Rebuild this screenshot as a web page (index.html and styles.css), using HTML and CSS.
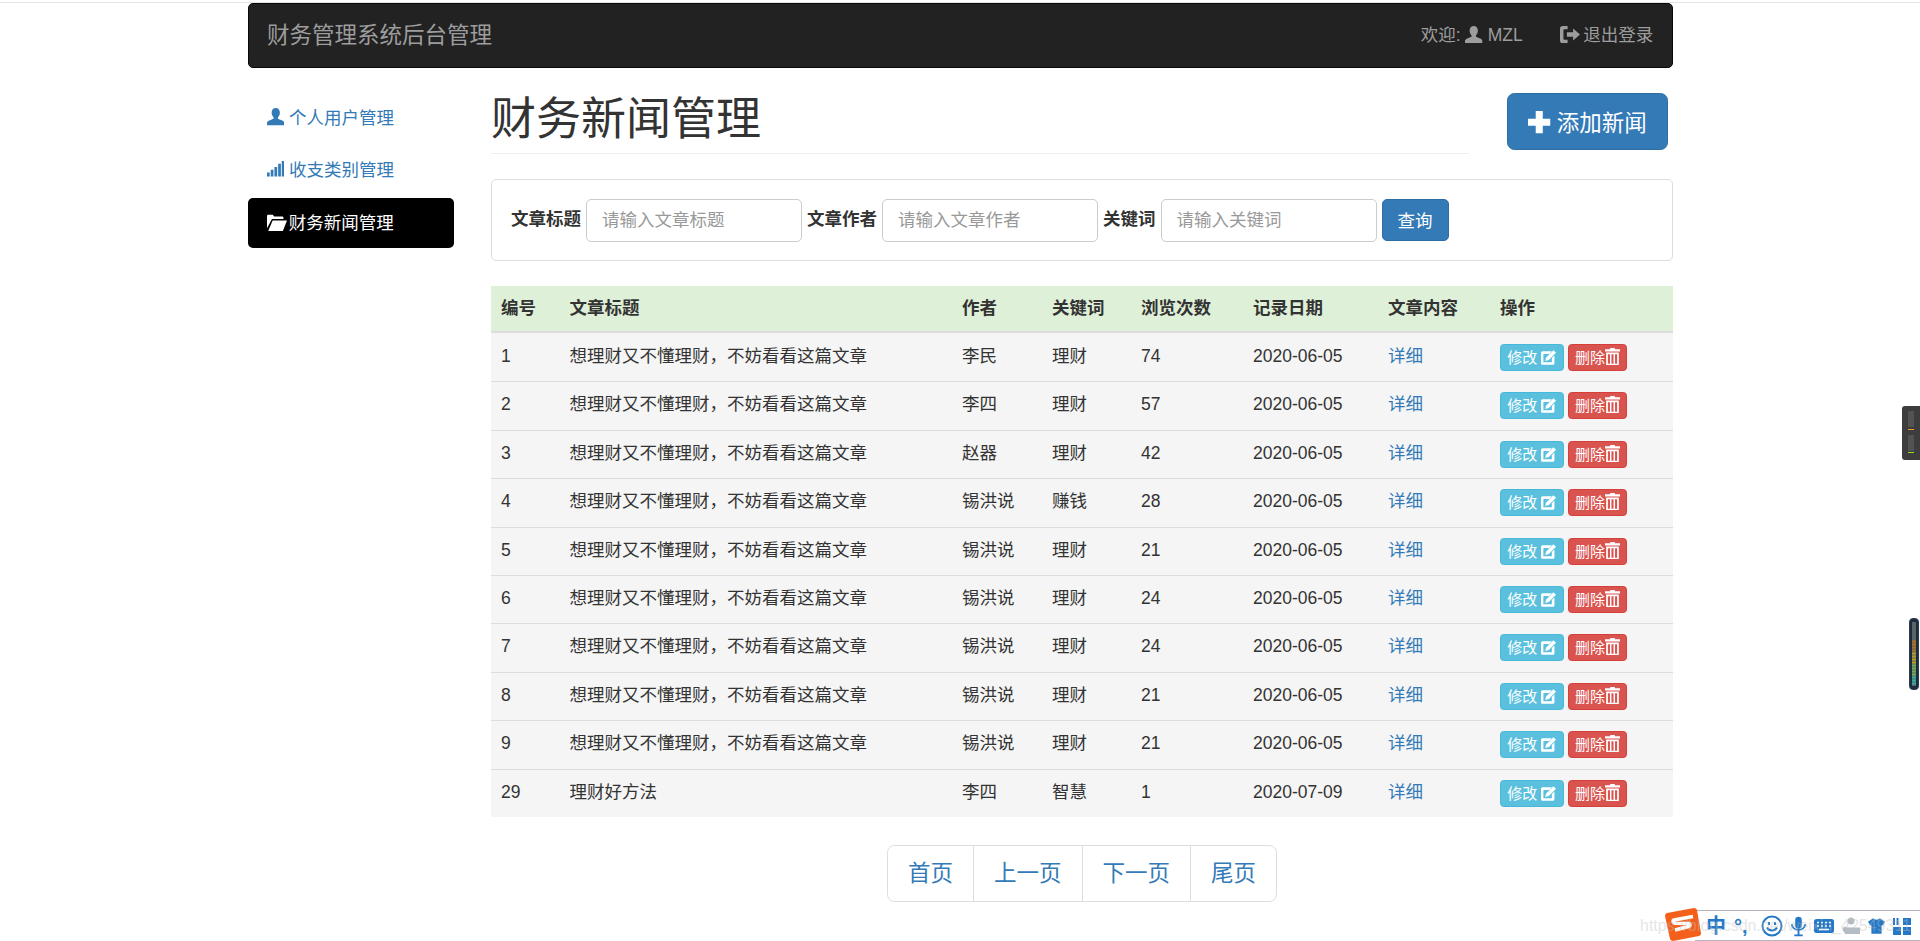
FILE: index.html
```html
<!DOCTYPE html>
<html lang="zh-CN">
<head>
<meta charset="utf-8">
<title>财务新闻管理</title>
<link rel="stylesheet" href="styles.css">
</head>
<body>
<svg class="sprite" aria-hidden="true">
  <symbol id="i-user" viewBox="1 1 14 14"><path d="M8 1C6 1 4.700 2.600 4.700 4.800c0 1.400.6 2.800 1.500 3.600v1.100C4.600 10.300 1.500 11 1 12.600V15h14v-2.400c-.5-1.600-3.600-2.300-5.200-3.100V8.400c.9-.8 1.500-2.200 1.500-3.600C11.300 2.600 10 1 8 1z"/></symbol>
  <symbol id="i-signal" viewBox="0 1 16 14"><path d="M0 11.500h2.500V15H0zM3.400 9h2.500v6H3.400zM6.800 6.500h2.500V15H6.800zM10.200 3.500h2.500V15h-2.500zM13.500 1H16v14h-2.500z"/></symbol>
  <symbol id="i-folder" viewBox="0 2.500 17 12" preserveAspectRatio="none"><path d="M0 12.500V4c0-.6.4-1 1-1h4l1 1.300h7c.6 0 1 .4 1 1V6H4.200z"/><path d="M4.800 7H17l-3.500 7.500H1z"/></symbol>
  <symbol id="i-logout" viewBox="1 1.500 14.500 13" preserveAspectRatio="none"><path d="M6.500 1.500H3a2 2 0 0 0-2 2v9a2 2 0 0 0 2 2h3.500V12H4.200a.7.7 0 0 1-.7-.7V4.700a.7.7 0 0 1 .7-.7h2.300z"/><path d="M6 6.300h4.500V3.500L15.500 8l-5 4.500V9.700H6z"/></symbol>
  <symbol id="i-plus" viewBox="1 1 14 14"><path d="M5.800 1h4.400v4.800H15v4.400h-4.800V15H5.800v-4.800H1V5.800h4.800z"/></symbol>
  <symbol id="i-edit" viewBox="1 1 14.500 14"><path d="M3 2h8.500l-2.500 2.500H3.700a.4.4 0 0 0-.4.4v7.400a.4.4 0 0 0 .4.4h7.400a.4.4 0 0 0 .4-.4V8.500L14 6v7.500a1.500 1.500 0 0 1-1.500 1.500h-10A1.500 1.500 0 0 1 1 13.500v-10A1.500 1.500 0 0 1 2.500 2z"/><path d="M13 1l2.500 2.500-7 7-3.500 1 1-3.500z"/></symbol>
  <symbol id="i-trash" viewBox="1.500 .5 13 15" preserveAspectRatio="none"><path d="M6 .5h4v1.200h4.500v1.800h-13V1.700H6z"/><path fill-rule="evenodd" d="M2.500 4.500h11v11h-11zM4 6v8.300h1.800V6zM7.100 6v8.300h1.800V6zM10.200 6v8.300H12V6z"/></symbol>
</svg>

<div class="top-line"></div>

<div class="container">
  <nav class="navbar">
    <a class="brand">财务管理系统后台管理</a>
    <div class="nav-right">
      <span class="nav-item">欢迎: <svg class="ico"><use href="#i-user"/></svg> MZL</span>
      <span class="nav-item"><svg class="ico ico-wide"><use href="#i-logout"/></svg>退出登录</span>
    </div>
  </nav>

  <div class="layout">
    <aside class="sidebar">
      <a class="pill"><svg class="ico"><use href="#i-user"/></svg> 个人用户管理</a>
      <a class="pill"><svg class="ico"><use href="#i-signal"/></svg> 收支类别管理</a>
      <a class="pill pill-active"><svg class="ico ico-wide ico-folder"><use href="#i-folder"/></svg>财务新闻管理</a>
    </aside>

    <main class="main">
      <div class="page-head">
        <div class="title"><h1>财务新闻管理</h1></div>
        <button class="btn btn-add"><svg class="ico"><use href="#i-plus"/></svg> 添加新闻</button>
      </div>

      <form class="search">
        <label>文章标题</label><input placeholder="请输入文章标题">
        <label>文章作者</label><input placeholder="请输入文章作者">
        <label>关键词</label><input placeholder="请输入关键词">
        <button type="button" class="btn btn-query">查询</button>
      </form>

      <table class="news">
        <colgroup>
          <col class="c-id"><col class="c-title"><col class="c-author"><col class="c-key"><col class="c-views"><col class="c-date"><col class="c-body"><col>
        </colgroup>
        <thead>
          <tr><th>编号</th><th>文章标题</th><th>作者</th><th>关键词</th><th>浏览次数</th><th>记录日期</th><th>文章内容</th><th>操作</th></tr>
        </thead>
        <tbody>
          <tr><td>1</td><td>想理财又不懂理财，不妨看看这篇文章</td><td>李民</td><td>理财</td><td>74</td><td>2020-06-05</td><td><a class="link">详细</a></td><td><div class="ops"><a class="mini mini-edit">修改 <svg class="ico"><use href="#i-edit"/></svg></a><a class="mini mini-del">删除<svg class="ico ico-trash"><use href="#i-trash"/></svg></a></div></td></tr>
          <tr><td>2</td><td>想理财又不懂理财，不妨看看这篇文章</td><td>李四</td><td>理财</td><td>57</td><td>2020-06-05</td><td><a class="link">详细</a></td><td><div class="ops"><a class="mini mini-edit">修改 <svg class="ico"><use href="#i-edit"/></svg></a><a class="mini mini-del">删除<svg class="ico ico-trash"><use href="#i-trash"/></svg></a></div></td></tr>
          <tr><td>3</td><td>想理财又不懂理财，不妨看看这篇文章</td><td>赵器</td><td>理财</td><td>42</td><td>2020-06-05</td><td><a class="link">详细</a></td><td><div class="ops"><a class="mini mini-edit">修改 <svg class="ico"><use href="#i-edit"/></svg></a><a class="mini mini-del">删除<svg class="ico ico-trash"><use href="#i-trash"/></svg></a></div></td></tr>
          <tr><td>4</td><td>想理财又不懂理财，不妨看看这篇文章</td><td>锡洪说</td><td>赚钱</td><td>28</td><td>2020-06-05</td><td><a class="link">详细</a></td><td><div class="ops"><a class="mini mini-edit">修改 <svg class="ico"><use href="#i-edit"/></svg></a><a class="mini mini-del">删除<svg class="ico ico-trash"><use href="#i-trash"/></svg></a></div></td></tr>
          <tr><td>5</td><td>想理财又不懂理财，不妨看看这篇文章</td><td>锡洪说</td><td>理财</td><td>21</td><td>2020-06-05</td><td><a class="link">详细</a></td><td><div class="ops"><a class="mini mini-edit">修改 <svg class="ico"><use href="#i-edit"/></svg></a><a class="mini mini-del">删除<svg class="ico ico-trash"><use href="#i-trash"/></svg></a></div></td></tr>
          <tr><td>6</td><td>想理财又不懂理财，不妨看看这篇文章</td><td>锡洪说</td><td>理财</td><td>24</td><td>2020-06-05</td><td><a class="link">详细</a></td><td><div class="ops"><a class="mini mini-edit">修改 <svg class="ico"><use href="#i-edit"/></svg></a><a class="mini mini-del">删除<svg class="ico ico-trash"><use href="#i-trash"/></svg></a></div></td></tr>
          <tr><td>7</td><td>想理财又不懂理财，不妨看看这篇文章</td><td>锡洪说</td><td>理财</td><td>24</td><td>2020-06-05</td><td><a class="link">详细</a></td><td><div class="ops"><a class="mini mini-edit">修改 <svg class="ico"><use href="#i-edit"/></svg></a><a class="mini mini-del">删除<svg class="ico ico-trash"><use href="#i-trash"/></svg></a></div></td></tr>
          <tr><td>8</td><td>想理财又不懂理财，不妨看看这篇文章</td><td>锡洪说</td><td>理财</td><td>21</td><td>2020-06-05</td><td><a class="link">详细</a></td><td><div class="ops"><a class="mini mini-edit">修改 <svg class="ico"><use href="#i-edit"/></svg></a><a class="mini mini-del">删除<svg class="ico ico-trash"><use href="#i-trash"/></svg></a></div></td></tr>
          <tr><td>9</td><td>想理财又不懂理财，不妨看看这篇文章</td><td>锡洪说</td><td>理财</td><td>21</td><td>2020-06-05</td><td><a class="link">详细</a></td><td><div class="ops"><a class="mini mini-edit">修改 <svg class="ico"><use href="#i-edit"/></svg></a><a class="mini mini-del">删除<svg class="ico ico-trash"><use href="#i-trash"/></svg></a></div></td></tr>
          <tr><td>29</td><td>理财好方法</td><td>李四</td><td>智慧</td><td>1</td><td>2020-07-09</td><td><a class="link">详细</a></td><td><div class="ops"><a class="mini mini-edit">修改 <svg class="ico"><use href="#i-edit"/></svg></a><a class="mini mini-del">删除<svg class="ico ico-trash"><use href="#i-trash"/></svg></a></div></td></tr>
        </tbody>
      </table>

      <div class="pager-wrap">
        <div class="pager"><a>首页</a><a>上一页</a><a>下一页</a><a>尾页</a></div>
      </div>
    </main>
  </div>
</div>

<svg class="widget widget-dark" viewBox="0 0 18 54">
  <path class="wd-bg" d="M18 0H3a3 3 0 0 0-3 3v48a3 3 0 0 0 3 3h15z"/>
  <path class="wd-tick" d="M6 6h6M6 8h6M6 10h6M6 12h6M6 14h6M6 16h6M6 18h6M6 20h6M6 30h6M6 32h6M6 34h6M6 36h6M6 38h6M6 40h6M6 42h6M6 44h6"/>
  <path class="wd-orange" d="M6 23.500h6"/>
  <path class="wd-green" d="M6 46.500h6"/>
</svg>

<svg class="widget widget-meter" viewBox="0 0 10 72">
  <rect class="wm-frame" x=".5" y=".5" width="9" height="71" rx="3.500"/>
  <rect class="wm-inner" x="3" y="4" width="4" height="64"/>
  <path class="wm-t1" d="M3 23.500h4M3 26.500h4M3 29.500h4M3 32.500h4"/>
  <path class="wm-t2" d="M3 35.500h4M3 38.500h4M3 41.500h4M3 44.500h4"/>
  <path class="wm-t3" d="M3 47.500h4M3 50.500h4M3 53.500h4M3 56.500h4"/>
  <path class="wm-t4" d="M3 59.500h4M3 62.500h4M3 65.500h4"/>
</svg>

<div class="ime">
  <div class="ime-bar">
    <span class="ime-zh">中</span>
    <span class="ime-punct">°,</span>
    <svg class="ime-ico ime-22" viewBox="0 0 22 22"><circle class="is" cx="11" cy="11" r="9.500"/><path class="is" d="M6 12.500c2 4 8 4 10 0"/><path class="if" d="M7 7h2v3H7zM13 7h2v3h-2z"/></svg>
    <svg class="ime-ico ime-16" viewBox="0 0 16 22"><rect class="if" x="4.500" y="1" width="7" height="13" rx="3.500"/><path class="is" d="M1 9c0 8 14 8 14 0M8 15v5M3.500 21h9"/></svg>
    <svg class="ime-ico ime-20" viewBox="0 0 20 16"><rect class="if" x="0" y="1" width="20" height="14" rx="2.500"/><path class="iw" d="M3 4.500h2M7 4.500h2M11 4.500h2M15 4.500h2M3 8h2M7 8h2M11 8h2M15 8h2M5 11.500h10"/></svg>
    <svg class="ime-ico ime-18" viewBox="0 0 18 18"><circle class="ig" cx="9" cy="4" r="3.500"/><path class="ig" d="M0 12l4-3v1.500h14V17H4v1z"/></svg>
    <svg class="ime-ico ime-16b" viewBox="0 0 20 20"><path class="if" d="M6 1C8 3 12 3 14 1l6 4-2.500 4H16v10H4V9H2.500L0 5z"/></svg>
    <svg class="ime-ico ime-18" viewBox="0 0 18 18"><path class="if" d="M0 10h8v8H0zM10 10h8v8h-8zM0 1h2v7H0zM3.500 1h2v7h-2zM10 1h8v7h-8z"/></svg>
  </div>
  <svg class="ime-logo" viewBox="0 0 36 34"><path class="il" d="M2 6l27-5c1.500 0 2.500.8 3 2l4 23c0 1.500-.8 2.500-2 3L8 34c-1.500 0-2.500-.8-3-2L0 9c0-1.500.8-2.500 2-3z"/><path class="iw2" d="M28 9.500L9 13c-1.500.5-1 3 .5 3.200l14 .3c2 .3 2 2.500.3 3L10 23"/></svg>
  <span class="watermark">https://blog.csdn.net/weixin_42549311</span>
</div>
</body>
</html>
```

FILE: styles.css
```css
* { box-sizing: border-box; }
html, body { margin: 0; height: 941px; overflow: hidden; }
body {
  position: relative;
  background: #fff;
  color: #333;
  font-family: "Liberation Sans", "Noto Sans CJK SC", sans-serif;
  font-size: 17.5px;
  line-height: 25px;
}
a { text-decoration: none; }

.sprite { display: none; }
.ico {
  display: inline-block;
  width: 17.5px;
  height: 17.5px;
  vertical-align: -2px;
  fill: currentColor;
}
.ico-wide { width: 20px; height: 17px; margin-right: 3px; }
.ico-folder { margin-right: 2px; }

.top-line { height: 3px; border-top: 2px solid #fff; border-bottom: 1px solid #e4e4e4; }

.container { width: 1425px; margin-left: 248px; }

/* navbar */
.navbar {
  display: flex;
  justify-content: space-between;
  align-items: center;
  height: 65px;
  padding: 0 0 0 18px;
  background: #222;
  border: 1px solid #080808;
  border-radius: 5px;
  color: #9d9d9d;
}
.brand { font-size: 22.5px; color: #9d9d9d; }
.nav-right { display: flex; }
.nav-item { padding: 0 18.75px; }

/* layout */
.layout { display: flex; gap: 37px; margin-top: 24px; }
.sidebar { width: 206px; display: flex; flex-direction: column; gap: 3px; }
.pill {
  display: block;
  height: 50px;
  padding: 12.5px 18.750px;
  border-radius: 5px;
  color: #337ab7;
}
.pill:first-child { padding-top: 13.5px; }
.pill-active { background: #000; color: #fff; }
.main { width: 1182px; }

/* head */
.page-head { display: flex; justify-content: space-between; align-items: flex-start; padding-right: 5px; }
.title { width: 978px; height: 62px; padding-top: 3px; border-bottom: 1px solid #eee; }
.title h1 { margin: 0; font-size: 45px; line-height: 49.5px; font-weight: 400; }
.btn {
  font-family: inherit;
  color: #fff;
  background: #337ab7;
  border: 1px solid #2e6da4;
  cursor: pointer;
}
.btn-add {
  width: 161px;
  height: 57px;
  margin-top: 1px;
  padding: 0 0 2px;
  font-size: 22.5px;
  border-radius: 7.5px;
}
.btn-add .ico { width: 22.5px; height: 22.5px; vertical-align: -3px; }

/* search */
.search {
  display: flex;
  align-items: flex-start;
  margin-top: 25px;
  height: 82px;
  padding: 19px 19px 0;
  border: 1px solid #ddd;
  border-radius: 5px;
}
.search label { font-weight: 700; margin-right: 5px; line-height: 40px; }
.search input {
  width: 216px;
  height: 42.500px;
  margin-right: 5px;
  padding: 0 15px;
  font: inherit;
  color: #555;
  border: 1px solid #ccc;
  border-radius: 5px;
}
.search input::placeholder { color: #999; }
.btn-query {
  width: 67px;
  height: 42px;
  padding: 0 0 2px;
  font-size: 17.5px;
  border-radius: 5px;
}

/* table */
.news {
  width: 1182px;
  margin-top: 25px;
  table-layout: fixed;
  border-collapse: separate;
  border-spacing: 0;
}
.c-id { width: 68.5px; }
.c-title { width: 392.5px; }
.c-author { width: 90px; }
.c-key { width: 89px; }
.c-views { width: 112px; }
.c-date { width: 135px; }
.c-body { width: 112px; }
.news th, .news td {
  padding: 10px;
  text-align: left;
  vertical-align: top;
}
.news th {
  height: 47px;
  background: #dff0d8;
  font-weight: 700;
  border-bottom: 2px solid #ddd;
}
.news td {
  height: 48px;
  padding-top: 10px;
  padding-bottom: 0;
  background: #f5f5f5;
  border-top: 1px solid #ddd;
}
/* 48.4px rows, snapped to whole pixels */
.news tbody tr:nth-child(2) td,
.news tbody tr:nth-child(4) td,
.news tbody tr:nth-child(7) td,
.news tbody tr:nth-child(9) td { height: 49px; }
.news tbody tr:first-child td { border-top: 0; padding-top: 11px; }
.link { color: #337ab7; }
.ops { display: flex; gap: 4px; }
.mini {
  display: block;
  height: 27px;
  padding: 0 6.25px;
  font-size: 15px;
  line-height: 25px;
  color: #fff;
  border: 1px solid;
  border-radius: 3.750px;
  white-space: nowrap;
}
.mini .ico { width: 15px; height: 15px; vertical-align: -2px; }
.mini .ico-trash { height: 17px; vertical-align: -2px; }
.mini-edit { background: #5bc0de; border-color: #46b8da; }
.mini-del { background: #d9534f; border-color: #d43f3a; }

/* pager */
.pager-wrap { display: flex; justify-content: center; margin-top: 28px; }
.pager {
  display: flex;
  height: 57px;
  font-size: 22.5px;
  line-height: 55px;
  border: 1px solid #ddd;
  border-radius: 7.5px;
}
.pager a { padding: 0 20px; color: #337ab7; border-left: 1px solid #ddd; }
.pager a:first-child { border-left: 0; }

/* desktop overlays */
.widget { position: absolute; display: block; }
.widget-dark { left: 1902px; top: 406px; width: 18px; height: 54px; }
.wd-bg { fill: #3d3d3d; }
.wd-tick { stroke: #6a6a6a; stroke-width: 1; fill: none; }
.wd-orange { stroke: #f0a030; stroke-width: 1; }
.wd-green { stroke: #8fe020; stroke-width: 1; }
.widget-meter { left: 1909px; top: 618px; width: 10px; height: 72px; }
.wm-frame { fill: #1c2c3c; stroke: #2c3e50; }
.wm-inner { fill: #5c6468; }
.wm-t1, .wm-t2, .wm-t3, .wm-t4 { stroke-width: 2; fill: none; }
.wm-t1 { stroke: #b07020; }
.wm-t2 { stroke: #b8a020; }
.wm-t3 { stroke: #70b050; }
.wm-t4 { stroke: #30b0a0; }

.ime { position: absolute; left: 1640px; top: 905px; width: 280px; height: 36px; }
.ime-bar {
  position: absolute;
  left: 55px;
  top: 5px;
  right: 0;
  height: 31px;
  padding-left: 11px;
  display: flex;
  align-items: center;
  gap: 8px;
  border-top: 1px solid #b4b4c0;
  border-bottom: 1px solid #b4b4c0;
  color: #2478c8;
}
.ime-zh { width: 20px; font-size: 20px; font-weight: 700; line-height: 24px; }
.ime-punct { width: 18px; font-size: 20px; font-weight: 700; line-height: 24px; margin-right: 1px; }
.ime-ico { flex: none; display: block; }
.ime-22 { width: 22px; height: 22px; }
.ime-16 { width: 15px; height: 22px; }
.ime-16b { width: 17px; height: 18px; }
.ime-20 { width: 20px; height: 20px; }
.ime-18 { width: 18px; height: 18px; }
.is { fill: none; stroke: #2478c8; stroke-width: 2; }
.if { fill: #2478c8; }
.iw { fill: none; stroke: #fff; stroke-width: 1.500; }
.ig { fill: #b4bcc4; }
.ime-logo { position: absolute; left: 25px; top: 2px; width: 36px; height: 34px; }
.il { fill: #f4601c; }
.iw2 { fill: none; stroke: #fff; stroke-width: 3.500; }
.watermark {
  position: absolute;
  left: 0;
  top: 8px;
  font-size: 16px;
  color: rgba(190, 190, 190, .4);
  white-space: nowrap;
}
```
